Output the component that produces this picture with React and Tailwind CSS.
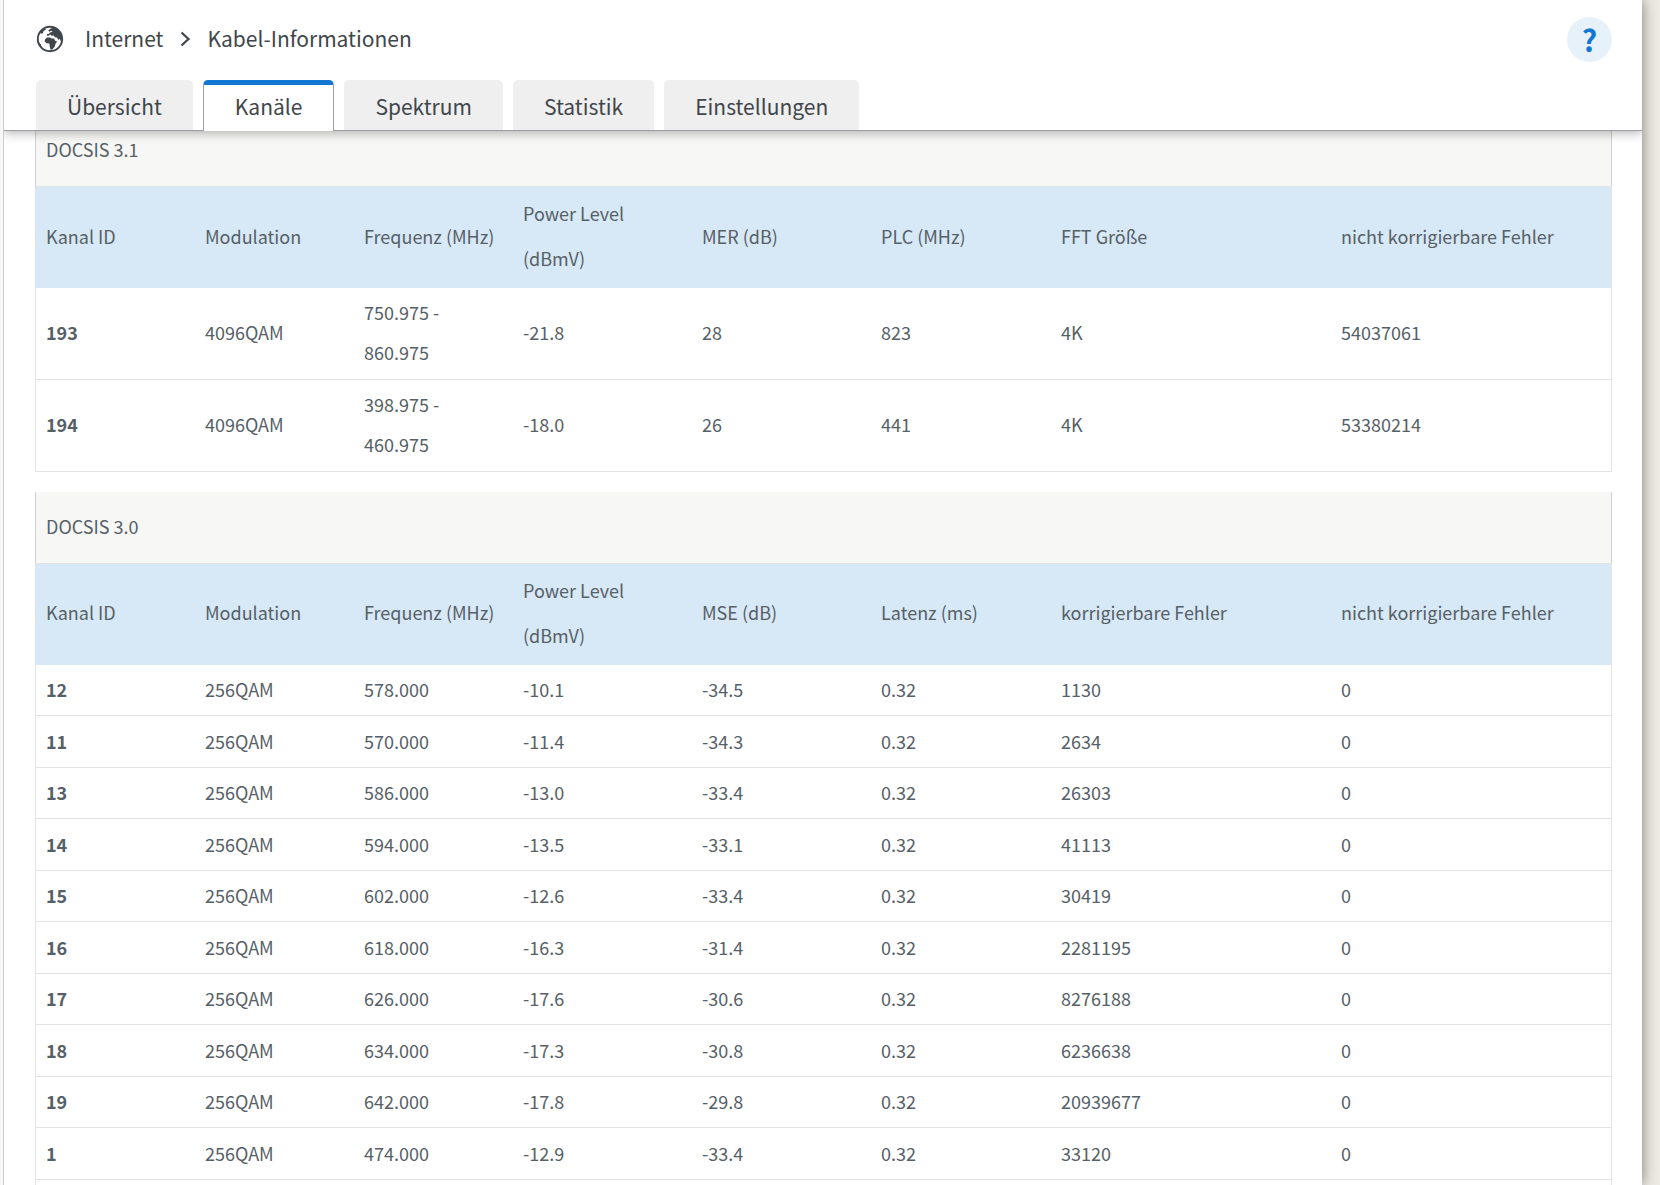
import { useState } from 'react'
import clsx from 'clsx'

const tabs = ['Übersicht', 'Kanäle', 'Spektrum', 'Statistik', 'Einstellungen']

const docsis31 = {
  title: 'DOCSIS 3.1',
  columns: ['Kanal ID', 'Modulation', 'Frequenz (MHz)', 'Power Level (dBmV)', 'MER (dB)', 'PLC (MHz)', 'FFT Größe', 'nicht korrigierbare Fehler'],
  rows: [
    ['193', '4096QAM', '750.975 - 860.975', '-21.8', '28', '823', '4K', '54037061'],
    ['194', '4096QAM', '398.975 - 460.975', '-18.0', '26', '441', '4K', '53380214'],
  ],
}

const docsis30 = {
  title: 'DOCSIS 3.0',
  columns: ['Kanal ID', 'Modulation', 'Frequenz (MHz)', 'Power Level (dBmV)', 'MSE (dB)', 'Latenz (ms)', 'korrigierbare Fehler', 'nicht korrigierbare Fehler'],
  rows: [
    ['12', '256QAM', '578.000', '-10.1', '-34.5', '0.32', '1130', '0'],
    ['11', '256QAM', '570.000', '-11.4', '-34.3', '0.32', '2634', '0'],
    ['13', '256QAM', '586.000', '-13.0', '-33.4', '0.32', '26303', '0'],
    ['14', '256QAM', '594.000', '-13.5', '-33.1', '0.32', '41113', '0'],
    ['15', '256QAM', '602.000', '-12.6', '-33.4', '0.32', '30419', '0'],
    ['16', '256QAM', '618.000', '-16.3', '-31.4', '0.32', '2281195', '0'],
    ['17', '256QAM', '626.000', '-17.6', '-30.6', '0.32', '8276188', '0'],
    ['18', '256QAM', '634.000', '-17.3', '-30.8', '0.32', '6236638', '0'],
    ['19', '256QAM', '642.000', '-17.8', '-29.8', '0.32', '20939677', '0'],
    ['1', '256QAM', '474.000', '-12.9', '-33.4', '0.32', '33120', '0'],
  ],
}

function GlobeIcon() {
  return (
    <svg className="size-7" viewBox="0 0 28 28" fill="none" aria-hidden="true">
      <circle cx="14" cy="14" r="12.2" stroke="#3f464c" strokeWidth="1.9" />
      <path
        fill="#3f464c"
        d="M12.2 5.6 14.8 3.4 18.6 2.6 22.6 5.2 25.4 9.6 26 13.6 24.6 16.2 23.6 13.4 22.6 15 20.8 12.6 19 12.2 17.6 10.6 15.4 10.8 14.4 9.6 12.6 10.8 10.8 10.8 11 9.2 13 8.8 14 7.4 16.6 6.8 15.4 5.8 13.4 6.8Z"
      />
      <path
        fill="#3f464c"
        d="M9 14.4 10.8 12.6 14 12.4 15.4 13.4 18 13.4 19.4 16 21.2 16.2 19.4 19 18.8 21.4 16.4 24.4 14.6 24.8 13.8 21.6 13.4 18.6 10.6 18.2 8.6 16.4Z"
      />
      <path fill="#3f464c" d="M4.2 6.6 8.6 3.4 10.2 4.2 7.6 6 6.8 8.2 4.6 8.8Z" />
      <path fill="#3f464c" d="M2 17.4 4.8 19.2 5.4 21.4 4.6 22.6Z" />
    </svg>
  )
}

function ChannelTable({ title, columns, rows, rowClass, className }) {
  return (
    <section className={clsx('flex flex-col', className)}>
      <h2 className="h-[71px] shrink-0 border-x border-[#cfd1d2] bg-[#f7f7f5] px-2.5 leading-[68px]">{title}</h2>
      <div className="grow border-x border-t border-[#e2e3e4]">
        <table className="w-full table-fixed border-collapse text-left">
          <colgroup>
            <col className="w-[159px]" />
            <col className="w-[159px]" />
            <col className="w-[159px]" />
            <col className="w-[179px]" />
            <col className="w-[179px]" />
            <col className="w-[180px]" />
            <col className="w-[280px]" />
            <col className="w-[280px]" />
          </colgroup>
          <thead>
            <tr className="bg-[#d7e8f6]">
              {columns.map((column) => (
                <th key={column} scope="col" className="pt-1 pr-1 pb-[7px] pl-2.5 font-normal leading-[45px]">
                  {column}
                </th>
              ))}
            </tr>
          </thead>
          <tbody>
            {rows.map(([id, ...values]) => (
              <tr key={id} className={clsx('border-b border-[#e2e3e4]', rowClass)}>
                <th scope="row" className="pb-0.5 pl-2.5 font-bold leading-10">{id}</th>
                {values.map((value, i) => (
                  <td key={i} className="pr-10 pb-0.5 pl-2.5 leading-10">{value}</td>
                ))}
              </tr>
            ))}
          </tbody>
        </table>
      </div>
    </section>
  )
}

export default function App() {
  const [active, setActive] = useState('Kanäle')

  return (
    <div className="h-screen overflow-hidden bg-[#eeebe4] pr-[18px] font-['Noto_Sans_CJK_SC','Source_Sans_Pro',sans-serif]">
      <div className="h-full bg-[#f7f7f7] pl-[3px] shadow-[0_0_14px_rgba(60,60,45,0.65)]">
        <div className="flex h-full flex-col overflow-hidden border-l border-[#cccccc] bg-white">
          <header className="relative z-10 shrink-0 border-b border-[#9b9fa3] bg-white pr-[30px] pl-8 shadow-[0_2px_10px_rgba(0,0,0,0.3)]">
            <div className="flex h-20 items-center justify-between pb-0.5">
              <nav aria-label="Pfad" className="flex items-center text-[21px] text-[#3f464c]">
                <GlobeIcon />
                <a href="#internet" className="ml-[21px]">Internet</a>
                <svg className="mx-3.5 h-4 w-4" viewBox="0 0 16 16" fill="none" stroke="#3f464c" strokeWidth="2.2" aria-hidden="true">
                  <path d="M4.5 1.5 11.5 8 4.5 14.5" />
                </svg>
                <span>Kabel-Informationen</span>
              </nav>
              <button
                type="button"
                aria-label="Hilfe"
                className="size-[45px] rounded-full bg-[#e6f1fa] text-center text-3xl font-bold leading-[45px] text-[#1277d3]"
              >
                ?
              </button>
            </div>
            <div role="tablist" className="-mb-px flex gap-2.5">
              {tabs.map((tab) => (
                <button
                  key={tab}
                  type="button"
                  role="tab"
                  aria-selected={tab === active}
                  onClick={() => setActive(tab)}
                  className={clsx(
                    'h-[51px] rounded-t-[5px] text-[21px] leading-7 text-[#3f464c]',
                    tab === active
                      ? 'border-x border-t-5 border-x-[#9b9fa3] border-t-[#1277d3] bg-white px-[31px] pb-[5px]'
                      : 'border-b border-[#9b9fa3] bg-[#efefef] px-[31px] pt-px'
                  )}
                >
                  {tab}
                </button>
              ))}
            </div>
          </header>

          <main className="-mt-4 flex grow flex-col gap-5 pr-[30px] pl-[31px] text-lg text-[#566067]">
            <ChannelTable {...docsis31} rowClass="odd:h-[91px] even:h-[92px]" />
            <ChannelTable {...docsis30} rowClass="odd:h-[51px] even:h-[52px]" className="grow" />
          </main>
        </div>
      </div>
    </div>
  )
}
